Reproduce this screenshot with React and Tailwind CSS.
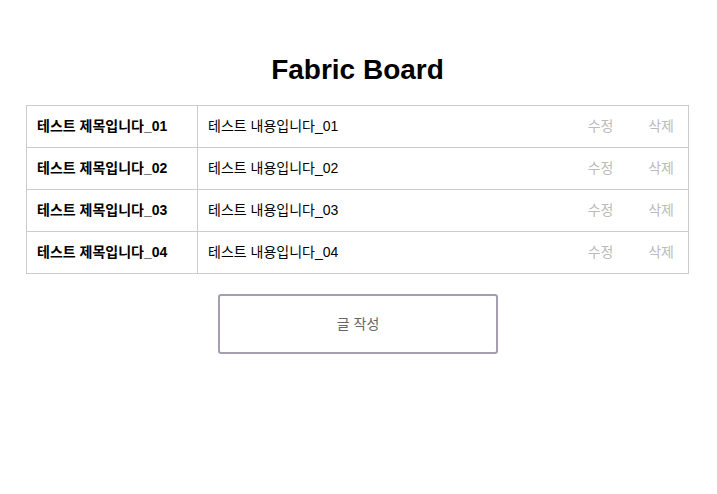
export default function App() {
  const rows = ["01", "02", "03", "04"];
  const font = { fontFamily: '"Liberation Sans", "Noto Sans CJK KR", sans-serif' };
  return (
    <div className="min-h-[494px] bg-white text-black" style={font}>
      <div className="pt-[52px]">
        <h1 className="pr-[2px] text-center text-[28px] leading-[36px] font-bold">Fabric Board</h1>
        <table className="mt-[17px] ml-[26px] w-[663px] border-collapse text-[14px]">
          <tbody>
            {rows.map((n) => (
              <tr key={n} className="h-[42px]">
                <td className="w-[171px] border border-[#cccccc] pl-[10px] font-bold">테스트 제목입니다_{n}</td>
                <td className="border-y border-l border-[#cccccc] pl-[10px]">테스트 내용입니다_{n}</td>
                <td className="border-y border-[#cccccc] w-[60px] pr-[34px] text-right text-[#bbbbbb]">수정</td>
                <td className="border-y border-r border-[#cccccc] w-[41px] pr-[14px] text-right text-[#bbbbbb]">삭제</td>
              </tr>
            ))}
          </tbody>
        </table>
        <div className="mt-[20px] flex justify-center">
          <button className="ml-[-1px] h-[60px] w-[280px] rounded-[3px] border-2 border-[#a59db0] bg-white text-[14px] text-[#666666]">
            글 작성
          </button>
        </div>
      </div>
    </div>
  );
}
